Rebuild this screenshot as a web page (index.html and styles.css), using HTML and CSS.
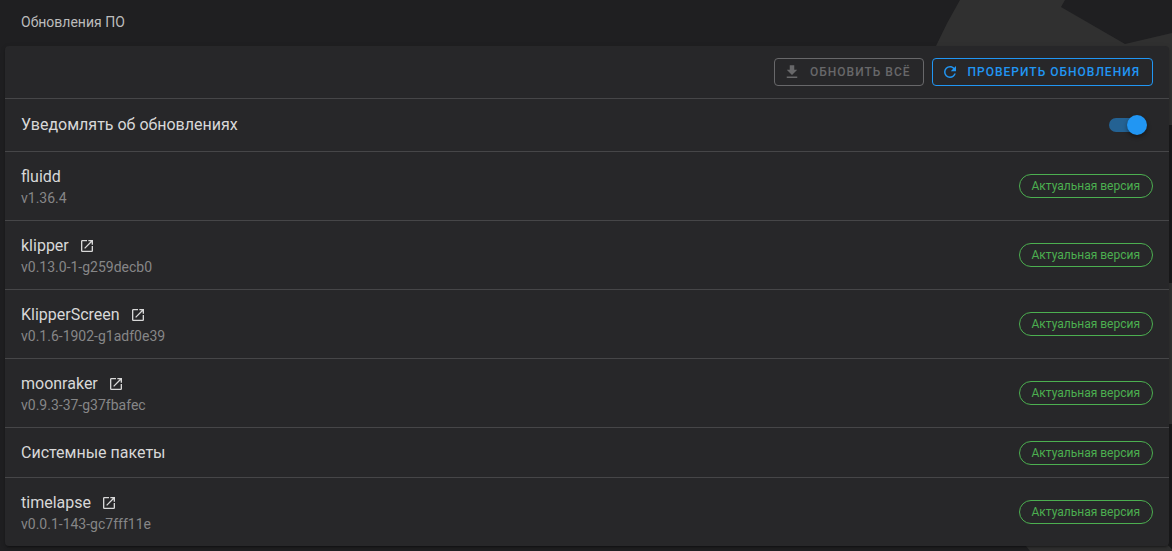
FILE: index.html
```html
<!DOCTYPE html>
<html lang="ru">
<head>
<meta charset="utf-8">
<meta name="viewport" content="width=device-width, initial-scale=1">
<title>Обновления ПО</title>
<link rel="stylesheet" href="styles.css">
</head>
<body>
<svg class="backdrop" width="240" height="551" viewBox="0 0 240 551" aria-hidden="true">
  <path fill="#303030" d="M28 0 Q15 22 4 46 V90 H240 V33 L193 44 L129 7 L133 0Z"/>
  <path fill="#303030" d="M220 46H240V125H220ZM220 283H240V424H220ZM90 541H232L240 549V551H98Z"/>
  <path fill="#1a1a1b" d="M220 125H240V283H220ZM220 424H240V549L232 541H220Z"/>
</svg>
<main class="page">
  <h1 class="heading">Обновления ПО</h1>
  <section class="card">
    <div class="toolbar">
      <button class="btn" type="button" disabled>
        <svg class="btn-icon" viewBox="0 0 24 24" aria-hidden="true"><path d="M5 20H19V18H5M19 9H15V3H9V9H5L12 16L19 9Z"/></svg>
        Обновить всё
      </button>
      <button class="btn btn-primary" type="button">
        <svg class="btn-icon" viewBox="0 0 24 24" aria-hidden="true"><path d="M17.65 6.35C16.2 4.9 14.21 4 12 4A8 8 0 0 0 4 12A8 8 0 0 0 12 20C15.73 20 18.84 17.45 19.73 14H17.65C16.83 16.33 14.61 18 12 18A6 6 0 0 1 6 12A6 6 0 0 1 12 6C13.66 6 15.14 6.69 16.22 7.78L13 11H20V4L17.65 6.35Z"/></svg>
        Проверить обновления
      </button>
    </div>
    <div class="row row-compact">
      <label class="title" for="notify">Уведомлять об обновлениях</label>
      <input class="switch" id="notify" type="checkbox" role="switch" checked>
    </div>
    <div class="row">
      <div class="info"><span class="title">fluidd</span><span class="version">v1.36.4</span></div>
      <span class="chip">Актуальная версия</span>
    </div>
    <div class="row">
      <div class="info"><span class="title">klipper<a class="link" href="#klipper" aria-label="klipper"><svg class="link-icon" viewBox="0 0 24 24"><path d="M14 3V5H17.59L7.76 14.83L9.17 16.24L19 6.41V10H21V3M19 19H5V5H12V3H5C3.89 3 3 3.9 3 5V19A2 2 0 0 0 5 21H19A2 2 0 0 0 21 19V12H19V19Z"/></svg></a></span><span class="version">v0.13.0-1-g259decb0</span></div>
      <span class="chip">Актуальная версия</span>
    </div>
    <div class="row">
      <div class="info"><span class="title">KlipperScreen<a class="link" href="#klipperscreen" aria-label="KlipperScreen"><svg class="link-icon" viewBox="0 0 24 24"><path d="M14 3V5H17.59L7.76 14.83L9.17 16.24L19 6.41V10H21V3M19 19H5V5H12V3H5C3.89 3 3 3.9 3 5V19A2 2 0 0 0 5 21H19A2 2 0 0 0 21 19V12H19V19Z"/></svg></a></span><span class="version">v0.1.6-1902-g1adf0e39</span></div>
      <span class="chip">Актуальная версия</span>
    </div>
    <div class="row">
      <div class="info"><span class="title">moonraker<a class="link" href="#moonraker" aria-label="moonraker"><svg class="link-icon" viewBox="0 0 24 24"><path d="M14 3V5H17.59L7.76 14.83L9.17 16.24L19 6.41V10H21V3M19 19H5V5H12V3H5C3.89 3 3 3.9 3 5V19A2 2 0 0 0 5 21H19A2 2 0 0 0 21 19V12H19V19Z"/></svg></a></span><span class="version">v0.9.3-37-g37fbafec</span></div>
      <span class="chip">Актуальная версия</span>
    </div>
    <div class="row row-single">
      <div class="info"><span class="title">Системные пакеты</span></div>
      <span class="chip">Актуальная версия</span>
    </div>
    <div class="row">
      <div class="info"><span class="title">timelapse<a class="link" href="#timelapse" aria-label="timelapse"><svg class="link-icon" viewBox="0 0 24 24"><path d="M14 3V5H17.59L7.76 14.83L9.17 16.24L19 6.41V10H21V3M19 19H5V5H12V3H5C3.89 3 3 3.9 3 5V19A2 2 0 0 0 5 21H19A2 2 0 0 0 21 19V12H19V19Z"/></svg></a></span><span class="version">v0.0.1-143-gc7fff11e</span></div>
      <span class="chip">Актуальная версия</span>
    </div>
  </section>
</main>
</body>
</html>
```
FILE: styles.css
```css
* { box-sizing: border-box; }

body {
  margin: 0;
  background: #1f1f21;
  color: #d8d8d8;
  font-family: Roboto, "Noto Sans", sans-serif;
  font-size: 14px;
  line-height: 20px;
}

.backdrop {
  position: absolute;
  top: 0;
  right: 0;
  z-index: -1;
}

.page { padding: 12px 3px 4px 5px; }

.heading {
  margin: 0;
  padding: 0 16px 14px;
  color: #bcbcbc;
  font-size: 14px;
  font-weight: 400;
}

.card {
  border-radius: 4px;
  background: #272729;
  box-shadow: 0 3px 1px -2px rgba(0, 0, 0, .2), 0 2px 2px rgba(0, 0, 0, .14), 0 1px 5px rgba(0, 0, 0, .12);
}

.toolbar {
  display: flex;
  justify-content: flex-end;
  gap: 8px;
  padding: 12px 16px;
}

.btn {
  display: flex;
  align-items: center;
  gap: 9px;
  height: 28px;
  padding: 0 12px 0 8px;
  border: 1px solid currentColor;
  border-radius: 4px;
  background: none;
  color: #68686a;
  font: 500 12px/20px Roboto, "Noto Sans", sans-serif;
  letter-spacing: 1px;
  text-transform: uppercase;
}

.btn-primary { color: #2196f3; }

.btn-icon {
  width: 18px;
  height: 18px;
  fill: currentColor;
}

.row {
  display: flex;
  align-items: center;
  justify-content: space-between;
  gap: 16px;
  min-height: 69px;
  padding: 0 16px;
  border-top: 1px solid #464648;
}

.row-compact { min-height: 53px; }

.row-single { min-height: 50px; }

.info {
  display: flex;
  flex-direction: column;
}

.title {
  display: flex;
  align-items: center;
  font-size: 16px;
  line-height: 24px;
}

.version {
  color: #868687;
  line-height: 18px;
}

.link {
  display: flex;
  margin-left: 10px;
  color: inherit;
}

.link-icon {
  width: 16px;
  height: 16px;
  fill: currentColor;
}

.chip {
  padding: 1px 12px;
  border: 1px solid #4caf50;
  border-radius: 12px;
  color: #4caf50;
  font-size: 12px;
  line-height: 20px;
}

.switch {
  appearance: none;
  position: relative;
  width: 36px;
  height: 14px;
  margin: 0 8px 0 0;
  border-radius: 7px;
  background: #246293;
}

.switch::before {
  content: "";
  position: absolute;
  top: -3px;
  right: -2px;
  width: 20px;
  height: 20px;
  border-radius: 50%;
  background: #2196f3;
  box-shadow: 0 2px 4px rgba(0, 0, 0, .4);
}
```
